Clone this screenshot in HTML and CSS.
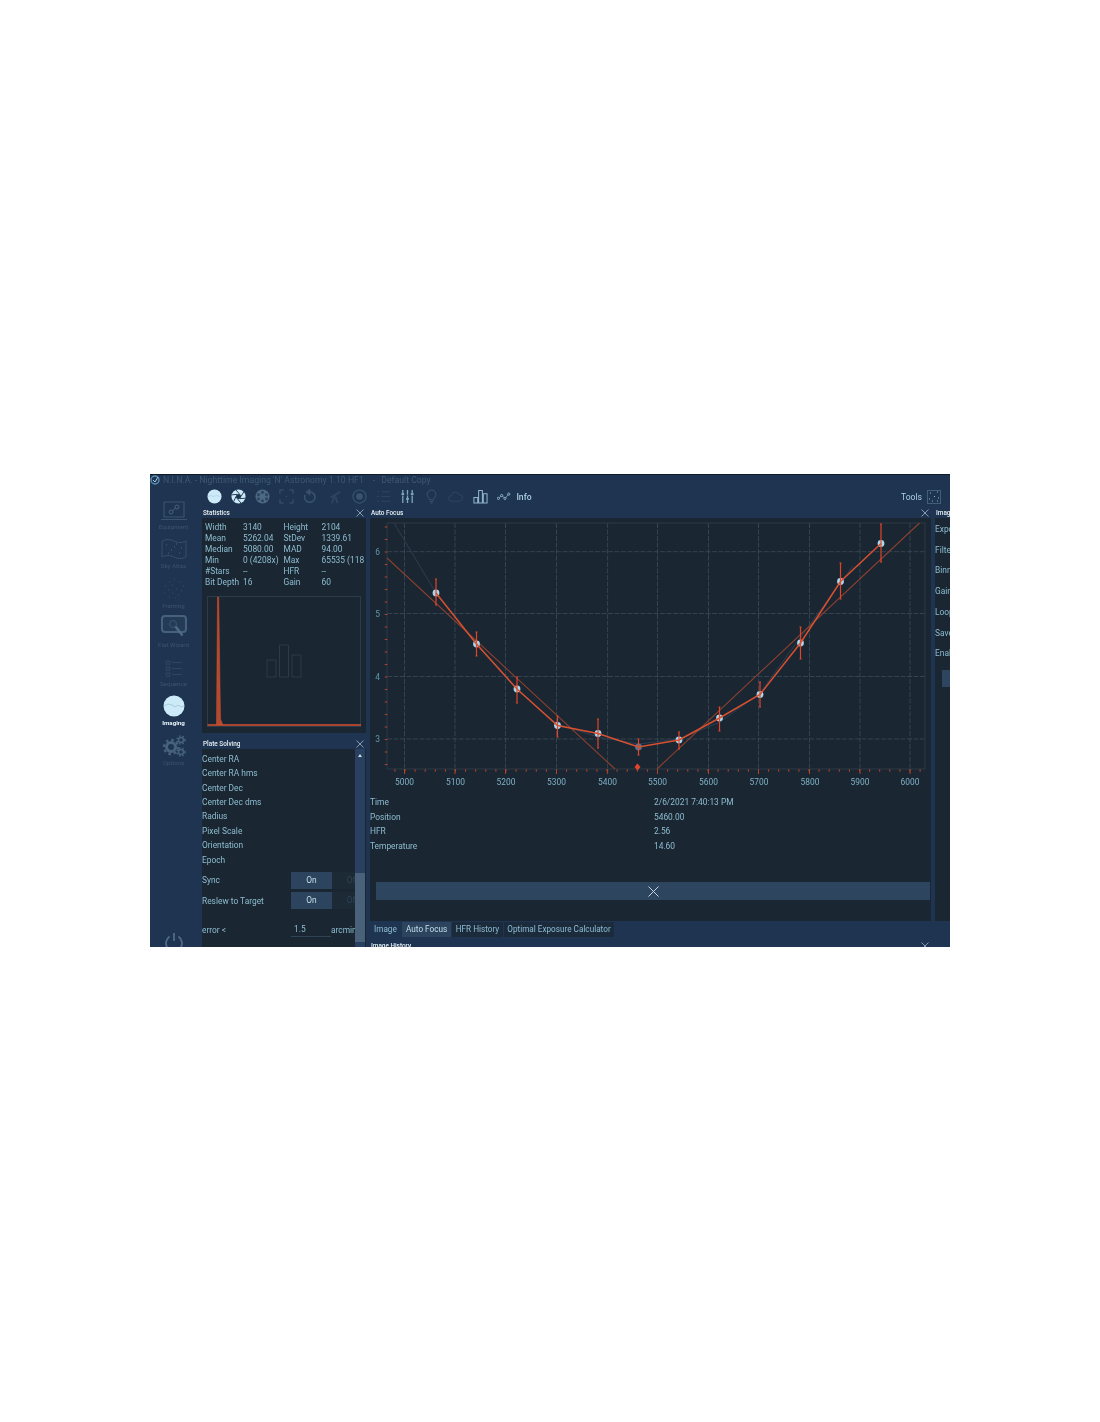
FILE: index.html
```html
<!DOCTYPE html>
<html lang="en">
<head>
    <meta charset="UTF-8">
    <title>N.I.N.A. - Auto Focus</title>
    <link rel="stylesheet" href="styles.css">
</head>
<body>
    <div class="window">
        <div class="titlebar">
            <svg class="logo" viewBox="0 0 10 10"><circle cx="5" cy="5" r="4" fill="none" stroke="#5b8fba" stroke-width="1.4"/><path d="M3 5l2 2 3-5" fill="none" stroke="#a9cfe0" stroke-width="1"/></svg>
            <span>N.I.N.A. - Nighttime Imaging 'N' Astronomy 1.10 HF1</span>
            <span class="title-sep">-</span>
            <span>Default Copy</span>
        </div>
        <div class="main">
            <nav class="sidebar">
                <div class="nav-item">
                    <svg viewBox="0 0 26 20" width="26" height="20"><path d="M3 1h20v15H3zM0 18.500h26" fill="none" stroke="#3a5470" stroke-width="1.200"/><circle cx="10" cy="11" r="2" fill="none" stroke="#46617d"/><circle cx="16" cy="6" r="2" fill="none" stroke="#46617d"/><path d="M11.500 9.500l3-2.200" stroke="#46617d"/></svg>
                    <span>Equipment</span>
                </div>
                <div class="nav-item">
                    <svg viewBox="0 0 26 22" width="26" height="22"><path d="M1 3c4-2 8-2 12 0s8 2 12 0v16c-4 2-8 2-12 0s-8-2-12 0z" fill="none" stroke="#364f6b"/><path d="M5 7h1M10 12h1M15 6h1M20 10h1M7 15h1M18 15h1M13 9h1" stroke="#46617d"/></svg>
                    <span>Sky Atlas</span>
                </div>
                <div class="nav-item">
                    <svg viewBox="0 0 24 22" width="24" height="22"><path d="M12 1h1M7 4h1M17 4h1M3 8h1M10 7h1M21 8h1M6 12h1M14 11h1M19 13h1M2 15h1M10 15h1M16 17h1M7 19h1M13 20h1" stroke="#364f6b" stroke-width="1.200"/></svg>
                    <span>Framing</span>
                </div>
                <div class="nav-item">
                    <svg viewBox="0 0 26 24" width="26" height="24"><rect x="1" y="1" width="24" height="16" rx="3" fill="#243a55" stroke="#46617d" stroke-width="2"/><circle cx="12" cy="9" r="3.500" fill="none" stroke="#3d5672" stroke-width="1"/><path d="M14.500 11.500l7 9" stroke="#4f6b88" stroke-width="2.400"/></svg>
                    <span>Flat Wizard</span>
                </div>
                <div class="nav-item">
                    <svg viewBox="0 0 26 20" width="26" height="20"><g fill="none" stroke="#364f6b" stroke-width=".7"><path d="M7 2l.8 1.600 1.800.2-1.300 1.200.3 1.700L7 5.900l-1.600.8.300-1.700L4.400 3.800l1.800-.2z"/><path d="M7 8l.8 1.600 1.800.2-1.300 1.200.3 1.700L7 11.900l-1.600.8.300-1.700-1.300-1.200 1.800-.2z"/><path d="M7 14l.8 1.600 1.800.2-1.300 1.200.3 1.700L7 17.900l-1.600.8.300-1.700-1.300-1.200 1.800-.2z"/><path d="M11 4.500h10M11 10.500h10M11 16.500h10"/></g></svg>
                    <span>Sequence</span>
                </div>
                <div class="nav-item nav-active">
                    <svg viewBox="0 0 22 22" width="22" height="22"><circle cx="11" cy="11" r="10.500" fill="#cdeaf9"/><path d="M1 11l4-2 4 1 3 2 3-2 3 2 3-1" fill="none" stroke="#8fb6cc" stroke-width=".6"/></svg>
                    <span>Imaging</span>
                </div>
                <div class="nav-item">
                    <svg viewBox="0 0 24 22" width="24" height="22"><g fill="none" stroke="#46617d"><circle cx="9" cy="12" r="4.500" stroke-width="3"/><circle cx="9" cy="12" r="7" stroke-width="2.500" stroke-dasharray="2.500 3"/><circle cx="19" cy="5" r="2.500" stroke-width="1.500"/><circle cx="19" cy="5" r="4" stroke-width="1.500" stroke-dasharray="1.500 1.800"/><circle cx="19" cy="17" r="2.500" stroke-width="1.500"/><circle cx="19" cy="17" r="4" stroke-width="1.500" stroke-dasharray="1.500 1.800"/></g></svg>
                    <span>Options</span>
                </div>
                <svg class="power" viewBox="0 0 20 20" width="20" height="20"><path d="M5.500 4.500a8 8 0 1 0 9 0M10 1v8" fill="none" stroke="#4f6b88" stroke-width="1.800"/></svg>
            </nav>

            <div class="workspace">
                <div class="toolbar">
                    <span class="tool"><svg viewBox="0 0 16 16"><circle cx="8" cy="8" r="7.500" fill="#cdeaf9"/><path d="M1 8l3-1 3 1 3-1 4 1" fill="none" stroke="#9cc3d8" stroke-width=".5"/></svg></span>
                    <span class="tool"><svg viewBox="0 0 16 16"><circle cx="8" cy="8" r="7.500" fill="#cdeaf9"/><circle cx="8" cy="8" r="2.700" fill="#1f3450"/><path d="M10.700 8l3.500-6M9.300 10.300l5.700-.5M6.700 10.300l4 4.700M5.300 8l-2.500 5.500M6.700 5.700L1 6.200M9.300 5.700L5.300 1" stroke="#1f3450" stroke-width="1"/></svg></span>
                    <span class="tool"><svg viewBox="0 0 16 16"><circle cx="8" cy="8" r="7.500" fill="#4d6985"/><g fill="#2f4661"><circle cx="8" cy="3.500" r="1.700"/><circle cx="8" cy="12.500" r="1.700"/><circle cx="3.700" cy="6" r="1.700"/><circle cx="12.300" cy="6" r="1.700"/><circle cx="3.700" cy="10.500" r="1.700"/><circle cx="12.300" cy="10.500" r="1.700"/></g></svg></span>
                    <span class="tool"><svg viewBox="0 0 16 16"><path d="M1 5V1h4M11 1h4v4M15 11v4h-4M5 15H1v-4M8 7.500v1" fill="none" stroke="#3a5470" stroke-width="1.100"/></svg></span>
                    <span class="tool"><svg viewBox="0 0 16 16"><path d="M7 3.200a5.500 5.500 0 1 1-4.600 3M7 1v4.500L4 3.200z" fill="none" stroke="#3a5470" stroke-width="1.600"/></svg></span>
                    <span class="tool"><svg viewBox="0 0 16 16"><path d="M3 9l10-6M7 8l-3 7M8 8l2 7" fill="none" stroke="#2f4661" stroke-width="1.800"/></svg></span>
                    <span class="tool"><svg viewBox="0 0 16 16"><circle cx="8" cy="8" r="7" fill="none" stroke="#3a5470" stroke-width="1.200"/><circle cx="8" cy="8" r="3.500" fill="#3a5470"/></svg></span>
                    <span class="tool"><svg viewBox="0 0 16 16"><path d="M1 3h2M1 8h2M1 13h2M6 3h9M6 8h9M6 13h9" stroke="#2f4661" stroke-width="1"/></svg></span>
                    <span class="tool"><svg viewBox="0 0 16 16"><path d="M3 1v14M8 1v14M13 1v14" stroke="#7ea6bc" stroke-width="1.400" stroke-dasharray="5 1 9"/><path d="M1.500 5.500h3M6.500 10.500h3M11.500 5.500h3" stroke="#7ea6bc" stroke-width="2"/></svg></span>
                    <span class="tool"><svg viewBox="0 0 16 16"><path d="M8 1a4.800 4.800 0 0 0-3 8.500c.6.500.8 1 .8 2h4.400c0-1 .2-1.500.8-2A4.800 4.800 0 0 0 8 1zM6 13.500h4M7 15.200h2" fill="none" stroke="#3a5470"/></svg></span>
                    <span class="tool"><svg viewBox="0 0 16 16"><path d="M4 13a3 3 0 0 1-.5-6 4.500 4.500 0 0 1 8.500-1 3.500 3.500 0 0 1 0 7z" fill="none" stroke="#2f4661"/></svg></span>
                    <span class="tool"><svg viewBox="0 0 16 16"><path d="M1 9h4v6H1zM6 1.500h4V15H6zM11 5h4v10h-4z" fill="none" stroke="#8db4c9" stroke-width="1.100"/></svg></span>
                    <span class="tool"><svg viewBox="0 0 16 16"><path d="M1.500 10l3.500-3 3.500 3 4-4.500" fill="none" stroke="#8db4c9" stroke-width=".7"/><g fill="#1f3450" stroke="#a9cfe0" stroke-width=".8"><circle cx="1.500" cy="10" r="1.200"/><circle cx="5" cy="7" r="1.200"/><circle cx="8.500" cy="10" r="1.200"/><circle cx="12.500" cy="5.500" r="1.200"/></g></svg></span>
                    <span class="tool-text">Info</span>
                    <span class="tool-right">Tools</span>
                    <svg class="tools-icon" viewBox="0 0 14 14"><rect x=".5" y=".5" width="13" height="13" fill="none" stroke="#425d7a"/><path d="M3 3h1M10 2h1M7 6.500h1M2 9h1M11 8h1M5 11h1M10 11h1" stroke="#8db4c9"/></svg>
                </div>

                <div class="docks">
                    <div class="dock-left">
                        <div class="pane-head">
                            <span>Statistics</span>
                            <svg class="close" viewBox="0 0 8 8"><path d="M.5.500l7 7M7.500.500l-7 7"/></svg>
                        </div>
                        <div class="panel stats-panel">
                            <div class="stats">
                                <span>Width</span><span>3140</span><span>Height</span><span>2104</span>
                                <span>Mean</span><span>5262.04</span><span>StDev</span><span>1339.61</span>
                                <span>Median</span><span>5080.00</span><span>MAD</span><span>94.00</span>
                                <span>Min</span><span>0 (4208x)</span><span>Max</span><span>65535 (118</span>
                                <span>#Stars</span><span>--</span><span>HFR</span><span>--</span>
                                <span>Bit Depth</span><span>16</span><span>Gain</span><span>60</span>
                            </div>
                            <svg class="histogram" viewBox="0 0 154 131" width="154" height="131">
                                <rect x=".5" y=".5" width="153" height="130" fill="none" stroke="#2c3b49"/>
                                <path d="M60 81h9v-17h-9zM72.500 81h9V49h-9zM85 81h9V59h-9z" fill="none" stroke="#2c3b49"/>
                                <path d="M9.500 128.500L10.500 1h1.200l1.800 122 2.200 5.500z" fill="#b04a30" stroke="#d8502f" stroke-width=".5"/>
                                <path d="M.5 129h153.500" stroke="#d8502f" stroke-width="1.700"/>
                            </svg>
                        </div>
                        <div class="pane-head pane-head-plate">
                            <span>Plate Solving</span>
                            <svg class="close" viewBox="0 0 8 8"><path d="M.5.500l7 7M7.500.500l-7 7"/></svg>
                        </div>
                        <div class="panel plate-panel">
                            <div class="plate-body">
                                <div class="plate-list">
                                    <div>Center RA</div>
                                    <div>Center RA hms</div>
                                    <div>Center Dec</div>
                                    <div>Center Dec dms</div>
                                    <div>Radius</div>
                                    <div>Pixel Scale</div>
                                    <div>Orientation</div>
                                    <div>Epoch</div>
                                </div>
                                <div class="setting-row setting-sync">
                                    <span class="setting-label">Sync</span>
                                    <div class="toggle"><span class="toggle-on">On</span><span class="toggle-off">Off</span></div>
                                </div>
                                <div class="setting-row">
                                    <span class="setting-label">Reslew to Target</span>
                                    <div class="toggle"><span class="toggle-on">On</span><span class="toggle-off">Off</span></div>
                                </div>
                                <div class="setting-row setting-error">
                                    <span class="setting-label">error &lt;</span>
                                    <span class="error-value">1.5</span>
                                    <span>arcmin</span>
                                </div>
                            </div>
                            <div class="scrollbar">
                                <span class="scroll-arrow"></span>
                                <span class="scroll-thumb"></span>
                            </div>
                        </div>
                    </div>

                    <div class="dock-center">
                        <div class="pane-head">
                            <span>Auto Focus</span>
                            <svg class="close" viewBox="0 0 8 8"><path d="M.5.500l7 7M7.500.500l-7 7"/></svg>
                        </div>
                        <div class="panel focus-panel">
                            <svg class="chart" viewBox="0 0 561 277" width="561" height="277">
                                <g stroke="#3b4b59" stroke-width=".8" stroke-dasharray="5 1.500">
                                    <path d="M34.500 5v246M85 5v246M135.500 5v246M186.500 5v246M237.600 5v246M287.500 5v246M338.500 5v246M388.500 5v246M439.500 5v246M490 5v246M540 5v246"/>
                                    <path d="M17 33.700h538M17 95.500h538M17 158.500h538M17 221h538"/>
                                </g>
                                <path d="M17 5h538v246H17z" fill="none" stroke="#2c3b49"/>
                                <path d="M16 8.500v243" stroke="#b5432b" stroke-width="2.500" stroke-dasharray="1 11.500"/>
                                <path d="M24.400 252.500h531" stroke="#b5432b" stroke-width="2.500" stroke-dasharray="1 9.100"/>
                                <path d="M34.500 251v5M85 251v5M135.500 251v5M186.500 251v5M237.600 251v5M287.500 251v5M338.500 251v5M388.500 251v5M439.500 251v5M490 251v5M540 251v5" stroke="#b5432b"/>
                                <path d="M24 5L66 75l41 52 40 45 40 34 41 13 40 7 41-5 41-17 40-29 40-55 41-56 12-16" fill="none" stroke="#2d3e52"/>
                                <path d="M17 40l228 211M287 251L549.500 5" fill="none" stroke="#8a4030" stroke-width="1.100"/>
                                <g fill="#a9d8ee">
                                    <circle cx="66" cy="75" r="3.400"/><circle cx="106.500" cy="126" r="3.400"/><circle cx="147" cy="171" r="3.400"/><circle cx="187.500" cy="207.500" r="3.400"/><circle cx="228" cy="215.500" r="3.400"/><circle cx="268.500" cy="229" r="3.400" fill="#55748c"/><circle cx="309" cy="222" r="3.400"/><circle cx="349.500" cy="200" r="3.400"/><circle cx="390" cy="176.500" r="3.400"/><circle cx="430.500" cy="125" r="3.400"/><circle cx="470.500" cy="63.500" r="3.400"/><circle cx="511" cy="25.500" r="3.400"/>
                                </g>
                                <path d="M66 61v26M106.500 114v24M147 159v26M187.500 198v21M228 201v29M268.500 221v16M309 214v17M349.500 189v24M390 164v25M430.500 109v32M470.500 45v36M511 6v38" stroke="#e0452a" stroke-width="1.200"/>
                                <path d="M65 61h2M65 87h2M105.500 114h2M105.500 138h2M146 159h2M146 185h2M186.500 198h2M186.500 219h2M227 201h2M227 230h2M267.500 221h2M267.500 237h2M308 214h2M308 231h2M348.500 189h2M348.500 213h2M389 164h2M389 189h2M429.500 109h2M429.500 141h2M469.500 45h2M469.500 81h2M510 6h2M510 44h2" stroke="#e0452a"/>
                                <path d="M66 75l40.500 51 40.500 45 40.500 36.500 40.500 8 40.500 13.500 40.500-7 40.500-22 40.500-23.500 40.500-51.500 40-61.500 40.500-38" fill="none" stroke="#d8502f" stroke-width="1.500"/>
                                <path d="M267.500 245.500l3 3.500-3 3.500-3-3.500z" fill="#e0452a"/>
                                <g class="axis-x" text-anchor="middle">
                                    <text x="34.500" y="267">5000</text><text x="85.500" y="267">5100</text><text x="136" y="267">5200</text><text x="186.500" y="267">5300</text><text x="237.500" y="267">5400</text><text x="287.500" y="267">5500</text><text x="338.500" y="267">5600</text><text x="389" y="267">5700</text><text x="440" y="267">5800</text><text x="490" y="267">5900</text><text x="540" y="267">6000</text>
                                </g>
                                <g class="axis-y" text-anchor="middle">
                                    <text x="7.500" y="37">6</text><text x="7.500" y="99">5</text><text x="7.500" y="162">4</text><text x="7.500" y="224">3</text>
                                </g>
                            </svg>
                            <div class="focus-info">
                                <span>Time</span><span>2/6/2021 7:40:13 PM</span>
                                <span>Position</span><span>5460.00</span>
                                <span>HFR</span><span>2.56</span>
                                <span>Temperature</span><span>14.60</span>
                            </div>
                            <div class="cancel-bar">
                                <svg viewBox="0 0 11 11" width="11" height="11"><path d="M.5.500l10 10M10.500.500l-10 10" stroke="#c4d3de"/></svg>
                            </div>
                        </div>
                        <div class="tabs">
                            <span class="tab">Image</span>
                            <span class="tab tab-active">Auto Focus</span>
                            <span class="tab">HFR History</span>
                            <span class="tab">Optimal Exposure Calculator</span>
                        </div>
                        <div class="pane-head pane-head-history">
                            <span>Image History</span>
                            <svg class="close" viewBox="0 0 8 8"><path d="M.5.500l7 7M7.500.500l-7 7"/></svg>
                        </div>
                    </div>

                    <div class="dock-right">
                        <div class="pane-head">
                            <span>Imaging</span>
                        </div>
                        <div class="panel right-panel">
                            <div>Exposure</div>
                            <div>Filter</div>
                            <div>Binning</div>
                            <div>Gain</div>
                            <div>Loop</div>
                            <div>Save</div>
                            <div>Enable</div>
                            <span class="right-button"></span>
                        </div>
                    </div>
                </div>
            </div>
        </div>
    </div>
</body>
</html>
```

FILE: styles.css
```css
* {
    margin: 0;
    padding: 0;
    box-sizing: border-box;
    font-family: Roboto, "Open Sans", sans-serif;
}
body {
    background: #fff;
    height: 1422px;
    overflow: hidden;
    padding: 474px 0 0 150px;
}
.window {
    width: 800px;
    height: 473px;
    overflow: hidden;
    background: #1f3450;
    border-top: 1px solid #101b29;
    display: flex;
    flex-direction: column;
    filter: blur(.6px);
    font-size: 8.4px;
    color: #8dbdd2;
}
.titlebar {
    height: 11px;
    display: flex;
    align-items: center;
    padding-bottom: 1px;
    font-size: 8.7px;
    color: #3e5874;
    white-space: nowrap;
}
.logo {
    width: 10px;
    height: 10px;
    margin-right: 3px;
}
.title-sep {
    margin: 0 6px 0 9px;
}
.main {
    flex: 1;
    display: flex;
    min-height: 0;
}

/* left navigation */
.sidebar {
    width: 52px;
    flex: none;
    display: flex;
    flex-direction: column;
    align-items: center;
    padding: 5.7px 5px 0 0;
    overflow: hidden;
}
.nav-item {
    height: 39.3px;
    width: 100%;
    flex: none;
    display: flex;
    flex-direction: column;
    align-items: center;
    justify-content: flex-end;
    gap: 2px;
    font-size: 6.2px;
    line-height: 8px;
    color: #3a5471;
}
.nav-active {
    color: #e6f3fa;
    font-weight: 700;
}
.power {
    margin-top: auto;
    margin-bottom: -5px;
    flex: none;
}

/* toolbar */
.workspace {
    flex: 1;
    min-width: 0;
    display: flex;
    flex-direction: column;
}
.toolbar {
    height: 21px;
    flex: none;
    display: flex;
    align-items: center;
    padding-right: 9px;
}
.tool {
    width: 24.2px;
    height: 16px;
    flex: none;
    display: flex;
    justify-content: center;
}
.tool svg {
    width: 15px;
    height: 15px;
}
.tool-text {
    font-size: 8.6px;
    font-weight: 500;
    color: #a9cfe0;
}
.tool-right {
    margin-left: auto;
    margin-right: 5px;
    font-size: 8.6px;
    color: #a9cfe0;
}
.tools-icon {
    width: 14px;
    height: 14px;
}

/* docks */
.docks {
    flex: 1;
    min-height: 0;
    display: grid;
    grid-template-columns: 164px 561px 15px;
    column-gap: 4px;
}
.dock-left,
.dock-center,
.dock-right {
    display: flex;
    flex-direction: column;
    min-width: 0;
    min-height: 0;
    overflow: hidden;
}
.pane-head {
    height: 11px;
    flex: none;
    display: flex;
    justify-content: space-between;
    align-items: center;
    font-size: 6.4px;
    font-weight: 500;
    color: #e6f0f5;
    white-space: nowrap;
    padding: 0 2px 0 1px;
}
.close {
    width: 8px;
    height: 8px;
    stroke: #9fb6c6;
    stroke-width: .8;
    fill: none;
}
.panel {
    background: #1a2631;
}
.stats-panel {
    height: 215px;
    flex: none;
    padding: 4px 0 0 3px;
}
.stats {
    display: grid;
    grid-template-columns: 38px 40.5px 38px auto;
    grid-auto-rows: 11.1px;
    line-height: 11.1px;
    white-space: nowrap;
    overflow: hidden;
    margin-bottom: 7.5px;
}
.histogram {
    display: block;
    margin-left: 2px;
}
.pane-head-plate {
    margin-top: 5px;
}
.plate-panel {
    flex: 1;
    min-height: 0;
    display: flex;
}
.plate-body {
    width: 153px;
    flex: none;
    overflow: hidden;
}
.plate-list {
    padding-top: 2.8px;
    line-height: 14.4px;
}
.setting-row {
    display: flex;
    align-items: center;
    height: 17px;
    margin-top: 3.5px;
    white-space: nowrap;
}
.setting-sync {
    margin-top: 4.5px;
}
.setting-label {
    width: 89px;
    flex: none;
}
.toggle {
    width: 64px;
    height: 17px;
    flex: none;
    display: flex;
    overflow: hidden;
}
.toggle span {
    width: 41px;
    flex: none;
    text-align: center;
    line-height: 17px;
}
.toggle-on {
    background: #2d445f;
    color: #c5dde9;
}
.toggle-off {
    background: #1c2a36;
    color: #2f4354;
}
.setting-error {
    margin-top: 13.5px;
    height: 14px;
}
.error-value {
    width: 40px;
    flex: none;
    padding-left: 3px;
    line-height: 13px;
    border-bottom: 1px solid #2f4354;
}
.scrollbar {
    width: 10px;
    flex: none;
    background: #2a4060;
    display: flex;
    flex-direction: column;
    align-items: center;
}
.scroll-arrow {
    margin-top: 5px;
    border-left: 2.5px solid transparent;
    border-right: 2.5px solid transparent;
    border-bottom: 3px solid #c7dbe6;
}
.scroll-thumb {
    width: 100%;
    height: 69px;
    margin-top: 116px;
    background: #4a617a;
}
.focus-panel {
    height: 403px;
    flex: none;
}
.chart {
    display: block;
}
.chart text {
    font-size: 8.4px;
}
.axis-x {
    fill: #7fb0c6;
}
.axis-y {
    fill: #5f97b0;
}
.focus-info {
    display: grid;
    grid-template-columns: 284px auto;
    line-height: 14.5px;
}
.cancel-bar {
    height: 18px;
    margin: 29px 1px 0 6px;
    background: #2e4560;
    display: flex;
    align-items: center;
    justify-content: center;
}
.tabs {
    height: 15px;
    flex: none;
    display: flex;
    margin-top: 1px;
    font-size: 8.2px;
    line-height: 15.5px;
    white-space: nowrap;
}
.tab {
    padding: 0 3.5px;
    background: #1b2b3c;
    margin-right: 1px;
}
.tab:first-child {
    width: 31px;
    padding: 0 4px;
    background: none;
}
.tab-active {
    padding: 0 4px;
    background: #2d445f;
    color: #c5dde9;
}
.pane-head-history {
    margin-top: 3px;
}
.right-panel {
    height: 403px;
    flex: none;
    white-space: nowrap;
    overflow: hidden;
    line-height: 20.7px;
    padding-top: 1px;
}
.right-button {
    display: block;
    width: 8px;
    height: 17px;
    margin: 6px 0 0 7px;
    background: #2e4560;
}
```
